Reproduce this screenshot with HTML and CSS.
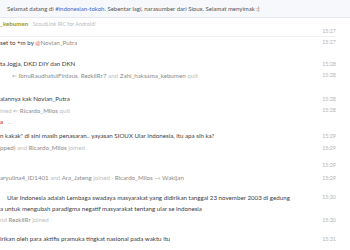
FILE: index.html
```html
<!DOCTYPE html>
<html lang="id">
<head>
    <meta charset="UTF-8">
    <title>#indonesian-tokoh</title>
    <link rel="stylesheet" href="styles.css">
</head>
<body>
    <div class="topic">Selamat datang di <span class="chan">#indonesian-tokoh</span>. Sebentar lagi, narasumber dari Sioux. Selamat menyimak :)</div>

    <div class="log">
        <div class="row first">
            <span class="msg"><b class="nick olive">_kebumen</b> <span class="reason">ScoutLink IRC for Android!</span></span>
            <span class="time low">15:27</span>
        </div>
        <div class="row tight">
            <span class="msg">set to +m by <span class="op">@</span><span class="who">Novian_Putra</span></span>
            <span class="time">15:27</span>
        </div>

        <div class="row" style="margin-top: 10px">
            <span class="msg">ta Jogja, DKD DIY dan DKN</span>
            <span class="time">15:28</span>
        </div>
        <div class="row tight">
            <span class="msg indent"><span class="arrow">&lArr;</span> <span class="who">IbnuRaudhatulFirdaus</span><span class="dim">,</span> <span class="who">RezkiIRr7</span> <span class="dim">and</span> <span class="who">Zahi_haksama_kebumen</span> <span class="dim">quit</span></span>
            <span class="time">15:28</span>
        </div>

        <div class="row" style="margin-top: 12px">
            <span class="msg">alannya kak Novian_Putra</span>
            <span class="time">15:28</span>
        </div>
        <div class="row tight">
            <span class="msg"><span class="dim">ined</span> <span class="arrow">&lArr;</span> <span class="who">Ricardo_Milos</span> <span class="dim">quit</span></span>
            <span class="time">15:28</span>
        </div>
        <div class="row">
            <span class="msg"><b class="nick red">a</b> <span class="reason">&hellip;</span></span>
        </div>

        <div class="row" style="margin-top: 2px">
            <span class="msg">n kakak" di sini masih penasaran.. yayasan SIOUX Ular Indonesia, itu apa sih ka?</span>
            <span class="time">15:29</span>
        </div>
        <div class="row">
            <span class="msg"><span class="who">pped)</span> <span class="dim">and</span> <span class="who">Ricardo_Milos</span> <span class="dim">joined</span></span>
            <span class="time">15:29</span>
        </div>
        <div class="row" style="margin-top: 5px">
            <span class="msg"></span>
            <span class="time">15:29</span>
        </div>
        <div class="row" style="margin-top: 1px">
            <span class="msg"><span class="who">aryulina4_ID1401</span> <span class="dim">and</span> <span class="who">Ara_Jateng</span> <span class="dim">joined &middot;</span> <span class="who">Ricardo_Milos</span> <span class="dim">&rarr;</span> <span class="who">Wakijan</span></span>
            <span class="time">15:29</span>
        </div>

        <div class="row wrap" style="margin-top: 8px">
            <span class="msg cut">Ular Indonesia adalah Lembaga swadaya masyarakat yang didirikan tanggal 23 november 2003 di gedung<br>a untuk mengubah paradigma negatif masyarakat tentang ular se indonesia</span>
            <span class="time">15:30</span>
        </div>
        <div class="row">
            <span class="msg"><span class="dim">nd</span> <span class="who">RezkiIRr</span> <span class="dim">joined</span></span>
            <span class="time">15:30</span>
        </div>

        <div class="row" style="margin-top: 7px">
            <span class="msg">irikan oleh para aktifis pramuka tingkat nasional pada waktu itu</span>
            <span class="time">15:31</span>
        </div>
    </div>
</body>
</html>
```

FILE: styles.css
```css
body {
    margin: 0;
    background: #fff;
    font-family: Lato, "Open Sans", sans-serif;
    font-size: 6.2px;
    color: #3d3d3d;
    overflow: hidden;
}
.topic {
    height: 17px;
    line-height: 17px;
    padding-left: 7px;
    background: #f6f8fb;
    border-bottom: 1px solid #e6eaf0;
    color: #555;
    font-size: 6px;
    white-space: nowrap;
}
.chan {
    color: #3f66c8;
}
.log {
    padding-right: 14px;
}
.row {
    display: flex;
    justify-content: space-between;
    align-items: flex-start;
    line-height: 12px;
    white-space: nowrap;
}
.row.first {
    height: 18px;
    border-bottom: 1px solid #eef1f5;
}
.row.tight {
    line-height: 11px;
}
.row.wrap {
    line-height: 11px;
}
.msg {
    overflow: hidden;
}
.msg.cut {
    text-indent: 7px;
}
.indent {
    padding-left: 12px;
}
.time {
    font-size: 5.4px;
    color: #b4b4b4;
    flex: none;
}
.time.low {
    margin-top: 7px;
}
.nick {
    font-weight: 700;
}
.olive {
    color: #9c9a2a;
}
.red {
    color: #e2553d;
}
.reason {
    font-size: 5.4px;
    color: #b8b8b8;
    margin-left: 3px;
}
.op {
    color: #e0574a;
}
.who {
    color: #8a8a8a;
}
.dim {
    color: #bdbdbd;
}
.arrow {
    color: #9aa3b0;
}
```
